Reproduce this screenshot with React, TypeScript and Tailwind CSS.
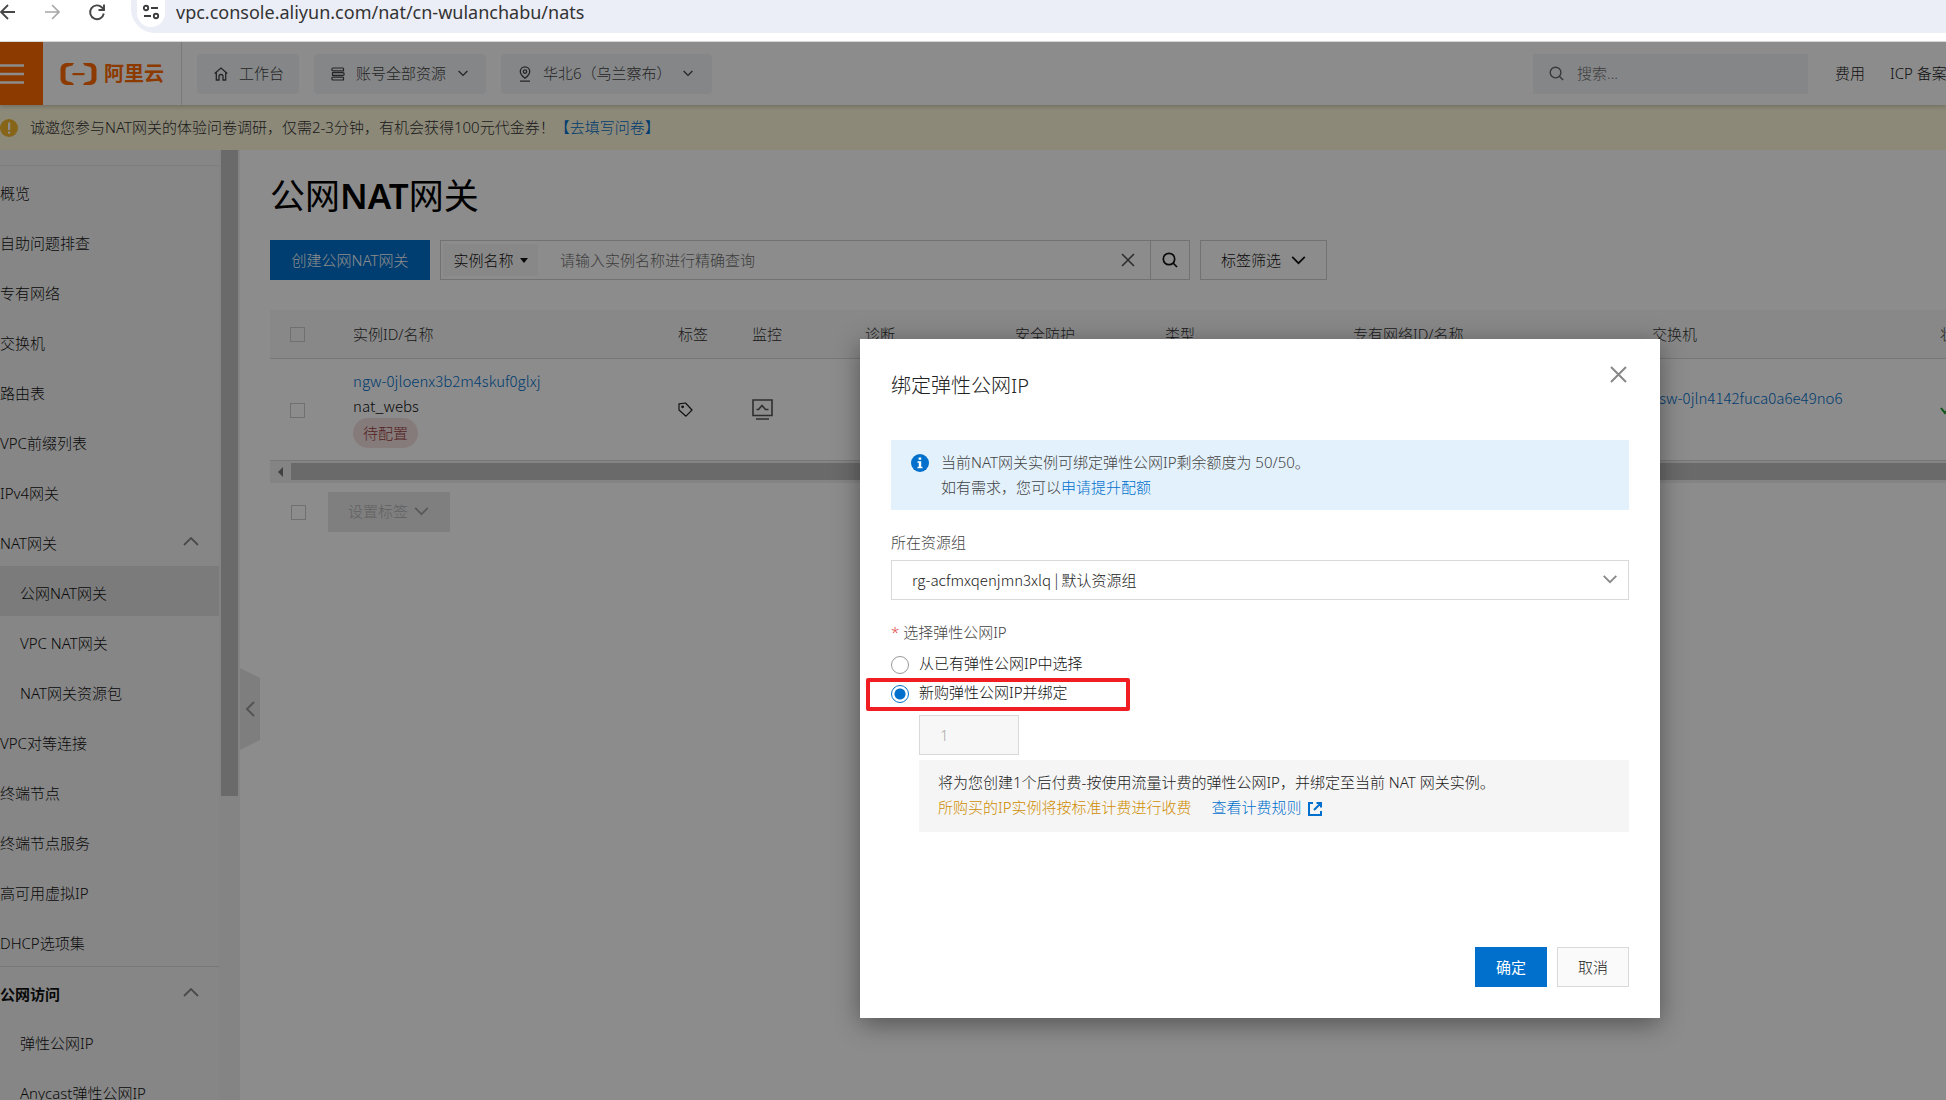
import type { ReactNode } from "react";

type IconProps = { d: string; className: string; width?: number; box?: string };

function Icon({ d, className, width = 2, box = "0 0 24 24" }: IconProps) {
  return (
    <svg viewBox={box} className={className} fill="none" stroke="currentColor" strokeWidth={width} aria-hidden="true">
      <path d={d} />
    </svg>
  );
}

const CHEVRON_DOWN = "M1 1l7 7 7-7";
const CHEVRON_UP = "M1 8l7-7 7 7";

function SearchIcon({ className, width = 1.5 }: { className: string; width?: number }) {
  return (
    <svg viewBox="0 0 16 16" className={className} fill="none" stroke="currentColor" strokeWidth={width} aria-hidden="true">
      <circle cx="7" cy="7" r="5.7" />
      <path d="M11 11l4 4" />
    </svg>
  );
}

function BrowserBar() {
  return (
    <div className="flex h-[42px] shrink-0 items-start border-b border-[#dcdcdc] bg-white">
      <button aria-label="后退" className="h-6 w-[42px] shrink-0 text-[#474747]">
        <Icon className="h-4 w-4" box="0 0 16 16" width={1.8} d="M15 8H1M8 1L1 8l7 7" />
      </button>
      <button aria-label="前进" className="h-6 w-[46px] shrink-0 text-[#a8a8a8]">
        <Icon className="ml-[2px] h-4 w-4" box="0 0 16 16" width={1.6} d="M1 8h14M8 1l7 7-7 7" />
      </button>
      <button aria-label="重新加载" className="h-6 w-[43px] shrink-0 text-[#474747]">
        <svg viewBox="0 0 18 18" className="h-[18px] w-[18px]" fill="none" stroke="currentColor" strokeWidth="1.9" aria-hidden="true">
          <path d="M15.800 10.500A6.900 6.900 0 1 1 14 4.500L16 6.500" />
          <path d="M16 1.500v5.500h-5.500" />
        </svg>
      </button>
      <div className="flex h-[33px] min-w-0 flex-1 items-start gap-[11px] rounded-bl-[24px] bg-[#ebeef7] pl-[6px]">
        <span className="flex h-[27px] w-[28px] shrink-0 items-end justify-center rounded-b-full bg-white pb-[7px]">
          <svg viewBox="0 0 18 16" className="h-4 w-[18px]" fill="none" stroke="#3c3c3c" strokeWidth="1.9" aria-hidden="true">
            <circle cx="4" cy="4" r="2.2" />
            <path d="M9 4h7M2 12h7" />
            <circle cx="14" cy="12" r="2.2" />
          </svg>
        </span>
        <input
          aria-label="地址栏"
          readOnly
          value="vpc.console.aliyun.com/nat/cn-wulanchabu/nats"
          className="h-[25px] min-w-0 flex-1 bg-transparent text-[18px] font-normal text-[#333] outline-none"
        />
      </div>
    </div>
  );
}

function TopButton({ className, children }: { className: string; children: ReactNode }) {
  return (
    <button className={`flex h-10 shrink-0 items-center rounded-sm bg-[#f2f4f8] pl-[17px] text-[15px] text-[#444] ${className}`}>
      {children}
    </button>
  );
}

function TopHeader() {
  return (
    <header className="relative z-10 flex h-[63px] shrink-0 items-center bg-white shadow-[0_2px_4px_rgba(0,0,0,0.18)]">
      <button aria-label="菜单" className="flex h-full w-[43px] shrink-0 items-center bg-[#ff6a00] text-white">
        <Icon className="h-5 w-6" box="0 0 24 20" width={2.5} d="M0 1.5h24M0 10h24M0 18.5h24" />
      </button>
      <a href="#home" className="flex h-full w-[139px] shrink-0 items-center gap-[7px] border-r border-[#ddd] pl-[17px] text-[#ff6a00]">
        <svg viewBox="0 0 37 24" className="h-6 w-[37px]" aria-hidden="true">
          <path fill="currentColor" d="M14 1H6.500A6 6 0 0 0 .5 7v10a6 6 0 0 0 6 6H14l-1.600-2.600-5-1.200a2.400 2.400 0 0 1-1.900-2.400V7.200a2.400 2.400 0 0 1 1.900-2.400l5-1.200z" />
          <path fill="currentColor" d="M23 1h7.500a6 6 0 0 1 6 6v10a6 6 0 0 1-6 6H23l1.600-2.600 5-1.200a2.400 2.400 0 0 0 1.900-2.400V7.200a2.400 2.400 0 0 0-1.900-2.400l-5-1.200z" />
          <path fill="currentColor" d="M12.500 11h12v2.200h-12z" />
        </svg>
        <span className="text-[20px] font-bold whitespace-nowrap">阿里云</span>
      </a>
      <nav className="ml-[15px] flex min-w-0 flex-1 items-center gap-[15px]">
        <TopButton className="w-[102px] gap-[11px]">
          <svg viewBox="0 0 14 14" className="h-[14px] w-[14px]" fill="none" stroke="currentColor" strokeWidth="1.3" aria-hidden="true">
            <path d="M.7 6.500L7 1l6.300 5.500M2.300 5.500V13H5V9.500a2 2 0 0 1 4 0V13h2.700V5.500" />
          </svg>
          工作台
        </TopButton>
        <TopButton className="w-[172px] gap-[11px]">
          <svg viewBox="0 0 14 14" className="h-[14px] w-[14px]" fill="none" stroke="currentColor" strokeWidth="1.2" aria-hidden="true">
            <path d="M12.500 1H2.200a1.400 1.400 0 0 0 0 2.800h10.300V1M1.200 5.600h10.600a1.400 1.400 0 0 1 0 2.800H1.500V5.600M12.500 10.200H2.200a1.400 1.400 0 0 0 0 2.800h10.300v-2.800" />
          </svg>
          账号全部资源
          <Icon className="ml-px h-[7px] w-[10px]" box="0 0 16 10" width={2.2} d={CHEVRON_DOWN} />
        </TopButton>
        <TopButton className="w-[211px] gap-[11px]">
          <svg viewBox="0 0 14 16" className="h-4 w-[14px]" fill="none" stroke="currentColor" strokeWidth="1.3" aria-hidden="true">
            <path d="M7 12.300C4 10 2.300 8 2.300 5.500a4.700 4.700 0 0 1 9.400 0C11.700 8 10 10 7 12.300zM2 15.200h10" />
            <circle cx="7" cy="5.600" r="1.700" />
          </svg>
          华北6（乌兰察布）
          <Icon className="h-[7px] w-[10px]" box="0 0 16 10" width={2.2} d={CHEVRON_DOWN} />
        </TopButton>
      </nav>
      <label className="flex h-10 w-[275px] shrink-0 items-center gap-[13px] bg-[#f2f4f8] pl-4 text-[#666]">
        <SearchIcon className="h-[15px] w-[15px]" />
        <input aria-label="搜索" placeholder="搜索..." className="min-w-0 flex-1 bg-transparent text-[15px] outline-none placeholder:text-[#707070]" />
      </label>
      <div className="ml-[27px] flex w-[111px] shrink-0 gap-[25px] overflow-hidden text-[15px] whitespace-nowrap text-[#222]">
        <a href="#fee">费用</a>
        <a href="#icp">ICP 备案</a>
      </div>
    </header>
  );
}

function Notice() {
  return (
    <div className="flex h-[45px] shrink-0 items-center bg-[#fff9dc] text-[15px] text-[#333]">
      <svg viewBox="0 0 18 18" className="h-[18px] w-[18px] shrink-0" aria-hidden="true">
        <circle cx="9" cy="9" r="9" fill="#f5b82e" />
        <path d="M8 3.500h2.200v7.500H8zM8 12.500h2.200v2.200H8z" fill="white" />
      </svg>
      <p className="ml-3 whitespace-nowrap">
        诚邀您参与NAT网关的体验问卷调研，仅需2-3分钟，有机会获得100元代金券！
        <a href="#survey" className="text-[#0070cc]">【去填写问卷】</a>
      </p>
    </div>
  );
}

const NAV: { label: string; kind?: "child" | "group" | "section"; active?: boolean }[] = [
  { label: "概览" },
  { label: "自助问题排查" },
  { label: "专有网络" },
  { label: "交换机" },
  { label: "路由表" },
  { label: "VPC前缀列表" },
  { label: "IPv4网关" },
  { label: "NAT网关", kind: "group" },
  { label: "公网NAT网关", kind: "child", active: true },
  { label: "VPC NAT网关", kind: "child" },
  { label: "NAT网关资源包", kind: "child" },
  { label: "VPC对等连接" },
  { label: "终端节点" },
  { label: "终端节点服务" },
  { label: "高可用虚拟IP" },
  { label: "DHCP选项集" },
  { label: "公网访问", kind: "section" },
  { label: "弹性公网IP", kind: "child" },
  { label: "Anycast弹性公网IP", kind: "child" },
];

function Sidebar() {
  return (
    <aside className="flex w-60 shrink-0 overflow-hidden bg-[#f5f5f5]">
      <nav className="min-w-0 flex-1 pt-[15px]">
        <ul className="border-t border-[#e6e6e6] text-[15px] text-[#111]">
          {NAV.map((item) => (
            <li key={item.label} className={item.kind === "section" ? "-mb-px border-t border-[#d8d8e0]" : ""}>
              <a
                href={`#${item.label}`}
                className={`flex h-[50px] items-center justify-between pt-[5px] pr-5 whitespace-nowrap ${item.kind === "child" ? "pl-5" : ""} ${item.active ? "bg-[#e0e0e0]" : ""} ${item.kind === "section" ? "font-bold" : ""}`}
              >
                {item.label}
                {(item.kind === "group" || item.kind === "section") && (
                  <Icon className="mb-1 h-[9px] w-4 text-[#888]" box="0 0 16 9" width={1.8} d={CHEVRON_UP} />
                )}
              </a>
            </li>
          ))}
        </ul>
      </nav>
      <div className="w-[21px] shrink-0 bg-[#f1f1f1] px-0.5">
        <div className="h-[68%] w-[17px] bg-[#c1c1c1]" />
      </div>
    </aside>
  );
}

function CheckBox({ label }: { label: string }) {
  return <input type="checkbox" aria-label={label} className="mt-0.5 block h-[15px] w-[15px] appearance-none border border-[#ccc] bg-transparent" />;
}

const COLUMNS = ["实例ID/名称", "标签", "监控", "诊断", "安全防护", "类型", "专有网络ID/名称", "交换机", "状态"];

function InstanceTable() {
  return (
    <div className="mt-[30px] overflow-hidden">
      <table className="w-[1720px] table-fixed border-collapse text-left text-[15px] text-[#222]">
        <colgroup>
          <col className="w-[67px]" />
          <col className="w-[325px]" />
          <col className="w-[74px]" />
          <col className="w-[113px]" />
          <col className="w-[150px]" />
          <col className="w-[150px]" />
          <col className="w-[188px]" />
          <col className="w-[299px]" />
          <col className="w-[288px]" />
          <col />
        </colgroup>
        <thead>
          <tr className="h-[48px] border-b border-[#d9d9d9] bg-[#f8f8f8]">
            <th className="pl-5">
              <CheckBox label="全选" />
            </th>
            {COLUMNS.map((c) => (
              <th key={c} className="px-4 font-light whitespace-nowrap text-[#333]">{c}</th>
            ))}
          </tr>
        </thead>
        <tbody>
          <tr className="h-[102px] border-b border-[#d9d9d9]">
            <td className="pl-5">
              <CheckBox label="选择 nat_webs" />
            </td>
            <td className="px-4 pb-0.5 font-['Noto_Sans_CJK_SC',sans-serif] leading-[25px]">
              <a href="#ngw" className="block whitespace-nowrap text-[#0070cc]">ngw-0jloenx3b2m4skuf0glxj</a>
              <span className="block text-[#111]">nat_webs</span>
              <span className="block w-fit rounded-full bg-[#f5e0e0] px-[10px] leading-[30px] text-[#984040]">待配置</span>
            </td>
            <td className="px-4">
              <button aria-label="标签" className="block">
                <svg viewBox="0 0 15 15" className="h-[15px] w-[15px]" fill="none" stroke="currentColor" strokeWidth="1.2" aria-hidden="true">
                  <path d="M1 1.800L7.500 1 14 8l-6 6.200L1 8z" strokeLinejoin="round" />
                  <circle cx="4.600" cy="4.800" r=".8" fill="currentColor" />
                </svg>
              </button>
            </td>
            <td className="px-4">
              <button aria-label="监控" className="block">
                <svg viewBox="0 0 21 21" className="h-[21px] w-[21px] text-[#555]" fill="none" stroke="currentColor" strokeWidth="1.6" aria-hidden="true">
                  <path d="M1 1h19v15.500H1zM4 20h13M4.500 10.500h2l3.500-4 3.500 4h3" />
                </svg>
              </button>
            </td>
            <td />
            <td />
            <td />
            <td />
            <td className="px-4 pb-[22px] font-['Noto_Sans_CJK_SC',sans-serif]">
              <a href="#vsw" className="whitespace-nowrap text-[#0070cc]">vsw-0jln4142fuca0a6e49no6</a>
            </td>
            <td className="px-4">
              <Icon className="h-3 w-[14px] text-[#1a9c2b]" box="0 0 14 12" width={2} d="M1 5l4 5 8-9" />
            </td>
          </tr>
        </tbody>
      </table>
      <div className="flex h-[22px] items-center gap-2 bg-[#f1f1f1] pl-2">
        <svg viewBox="0 0 5 10" className="h-[10px] w-[5px] shrink-0" fill="#777" aria-hidden="true">
          <path d="M5 0v10L0 5z" />
        </svg>
        <div className="h-[17px] flex-1 bg-[#c1c1c1]" />
      </div>
    </div>
  );
}

function Content() {
  return (
    <main className="relative min-w-0 flex-1 overflow-hidden bg-white pt-6 pl-[30px]">
      <button aria-label="收起侧栏" className="absolute top-[518px] left-0 h-[82px] w-5 text-[#999]">
        <svg viewBox="0 0 20 82" className="h-full w-full" fill="none" aria-hidden="true">
          <path d="M0 0l20 10v62L0 82z" fill="#e6e6e6" />
          <path d="M14 34l-7 7 7 7" stroke="currentColor" strokeWidth="2" />
        </svg>
      </button>
      <h1 className="text-[35px] leading-[44px] font-normal whitespace-nowrap text-black">
        公网<span className="font-semibold">NAT</span>网关
      </h1>
      <div className="mt-[22px] flex h-10 text-[15px]">
        <button className="w-40 shrink-0 bg-[#0070cc] whitespace-nowrap text-white">创建公网NAT网关</button>
        <div className="ml-[10px] flex w-[750px] shrink-0 items-center border border-[#d0d0d0]">
          <button className="ml-0.5 flex h-8 w-[95px] shrink-0 items-center justify-center gap-[6px] bg-[#f8f8f8] whitespace-nowrap text-[#111]">
            实例名称
            <svg viewBox="0 0 8 5" className="h-[5px] w-2" fill="currentColor" aria-hidden="true">
              <path d="M0 0h8L4 5z" />
            </svg>
          </button>
          <input
            aria-label="实例名称"
            placeholder="请输入实例名称进行精确查询"
            className="ml-[22px] min-w-0 flex-1 bg-transparent outline-none placeholder:text-[#707070]"
          />
          <button aria-label="清除" className="mr-[15px] text-[#555]">
            <Icon className="h-[14px] w-[14px]" box="0 0 14 14" width={1.6} d="M1 1l12 12M13 1L1 13" />
          </button>
          <button aria-label="查询" className="flex h-full w-[39px] items-center justify-center border-l border-[#d0d0d0] text-[#111]">
            <SearchIcon className="h-4 w-4" width={1.7} />
          </button>
        </div>
        <button className="ml-[10px] flex w-[127px] shrink-0 items-center gap-[10px] border border-[#d0d0d0] pl-5 whitespace-nowrap text-[#111]">
          标签筛选
          <Icon className="h-[9px] w-[15px]" box="0 0 16 10" width={1.9} d={CHEVRON_DOWN} />
        </button>
      </div>
      <InstanceTable />
      <div className="mt-[9px] flex items-center gap-[22px] pl-[21px]">
        <CheckBox label="批量选择" />
        <button disabled className="flex h-10 w-[122px] items-center gap-[6px] bg-[#e8e8e8] pl-5 text-[15px] whitespace-nowrap text-[#b0b0b0]">
          设置标签
          <Icon className="h-[9px] w-[15px] text-[#a0a0a0]" box="0 0 16 10" width={1.9} d={CHEVRON_DOWN} />
        </button>
      </div>
    </main>
  );
}

const RADIO =
  "mt-0.5 h-[18px] w-[18px] shrink-0 appearance-none rounded-full border border-[#999] bg-white checked:border-[#0070cc] checked:bg-[radial-gradient(circle,#0070cc_5px,white_6px)]";

function BindDialog() {
  return (
    <section
      role="dialog"
      aria-modal="true"
      aria-labelledby="dialog-title"
      className="w-[800px] bg-white px-[31px] pb-[31px] text-[15px] leading-[25px] text-[#444] shadow-[0_6px_24px_rgba(0,0,0,0.4)]"
    >
      <div className="flex items-start justify-between pt-[27px]">
        <h2 id="dialog-title" className="mt-[5px] text-[20px] leading-[30px] text-[#222]">绑定弹性公网IP</h2>
        <button aria-label="关闭" className="mr-[2px] text-[#888]">
          <Icon className="h-[17px] w-[17px]" box="0 0 17 17" width={2} d="M1 1l15 15M16 1L1 16" />
        </button>
      </div>
      <div className="mt-[39px] flex bg-[#e3f1fc] py-[10px] pl-5">
        <svg viewBox="0 0 18 18" className="mt-1 mr-3 h-[18px] w-[18px] shrink-0" aria-hidden="true">
          <circle cx="9" cy="9" r="9" fill="#0070cc" />
          <path d="M7.600 3.500h2.600v2.200H7.600zM6.500 7.200h3.700v5.500h1.300v1.500H6.500v-1.500h1.300V8.700H6.500z" fill="white" />
        </svg>
        <p>
          当前NAT网关实例可绑定弹性公网IP剩余额度为 50/50。
          <br />
          如有需求，您可以<a href="#quota" className="text-[#0070cc]">申请提升配额</a>
        </p>
      </div>
      <label htmlFor="group" className="mt-5 block">所在资源组</label>
      <div className="relative mt-[5px]">
        <select id="group" className="h-10 w-full appearance-none border border-[#d9d9d9] bg-white pb-0.5 pl-5 font-['Noto_Sans_CJK_SC',sans-serif] text-[#222]">
          <option>rg-acfmxqenjmn3xlq | 默认资源组</option>
        </select>
        <Icon className="pointer-events-none absolute top-[15px] right-[11px] h-[9px] w-4 text-[#888]" box="0 0 16 10" width={2} d={CHEVRON_DOWN} />
      </div>
      <fieldset className="mt-5">
        <legend>
          <span className="text-[#e54545]">*</span> 选择弹性公网IP
        </legend>
        <label className="mt-1 flex h-[29px] items-center gap-[10px] text-[#111]">
          <input type="radio" name="eip" className={RADIO} />
          从已有弹性公网IP中选择
        </label>
        <label className="relative flex h-[29px] items-center gap-[10px] text-[#111]">
          <input type="radio" name="eip" defaultChecked className={RADIO} />
          新购弹性公网IP并绑定
          <span className="absolute top-0 -left-[25px] h-[33px] w-[264px] rounded-[2px] border-4 border-[#f01e23]" />
        </label>
        <div className="mt-2 ml-7">
          <input
            aria-label="数量"
            disabled
            defaultValue="1"
            className="block h-10 w-[100px] border border-[#d9d9d9] bg-[#f7f7f7] px-5 text-[#aaa]"
          />
          <div className="mt-[5px] bg-[#f5f5f5] px-[19px] pt-[10px] pb-3 text-[#222]">
            <p>将为您创建1个后付费-按使用流量计费的弹性公网IP，并绑定至当前 NAT 网关实例。</p>
            <p className="flex items-center gap-5">
              <span className="text-[#cf8c00]">所购买的IP实例将按标准计费进行收费</span>
              <a href="#billing" className="flex items-center gap-[6px] text-[#0070cc]">
                查看计费规则
                <svg viewBox="0 0 14 14" className="mt-0.5 h-[14px] w-[14px]" fill="none" stroke="currentColor" strokeWidth="2" aria-hidden="true">
                  <path d="M5 1H1v12h12V9M8.500 1H13v4.500M13 1L6 8" />
                </svg>
              </a>
            </p>
          </div>
        </div>
      </fieldset>
      <div className="mt-[115px] flex justify-end gap-[10px]">
        <button className="h-10 w-[72px] bg-[#0070cc] font-normal text-white">确定</button>
        <button className="h-10 w-[72px] border border-[#d9d9d9] bg-[#fafafa] text-[#222]">取消</button>
      </div>
    </section>
  );
}

export default function App() {
  return (
    <div lang="zh-CN" className="flex h-screen flex-col overflow-hidden bg-white font-['Noto_Sans','Noto_Sans_CJK_SC',sans-serif] font-light">
      <BrowserBar />
      <div className="relative flex min-h-0 flex-1 flex-col">
        <TopHeader />
        <Notice />
        <div className="flex min-h-0 flex-1">
          <Sidebar />
          <Content />
        </div>
        <div className="absolute inset-0 z-20 flex items-start justify-end bg-black/45 pt-[297px] pr-[286px]">
          <BindDialog />
        </div>
      </div>
    </div>
  );
}
